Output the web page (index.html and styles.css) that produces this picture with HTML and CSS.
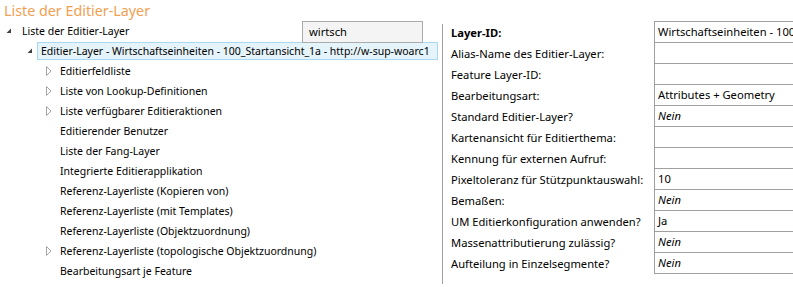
FILE: index.html
```html
<!DOCTYPE html>
<html>
<head>
<meta charset="utf-8">
<link rel="stylesheet" href="styles.css">
</head>
<body>
<div class="title">Liste der Editier-Layer</div>
<div class="main">
  <div class="tree">
    <div class="search">wirtsch</div>
    <div class="row lvl0"><span class="exp"><svg width="6" height="6" viewBox="0 0 6 6"><polygon points="5,0.5 5,5 0.5,5" fill="#404040"/></svg></span><span class="label">Liste der Editier-Layer</span></div>
    <div class="row lvl1"><span class="exp"><svg width="6" height="6" viewBox="0 0 6 6"><polygon points="5,0.5 5,5 0.5,5" fill="#404040"/></svg></span><span class="label sel">Editier-Layer - Wirtschaftseinheiten - 100_Startansicht_1a - http://w-sup-woarc1</span></div>
    <div class="row lvl2"><span class="exp"><svg width="6" height="10" viewBox="0 0 6 10"><polygon points="0.5,0.5 5,5 0.5,9.5" fill="none" stroke="#a6a6a6"/></svg></span><span class="label">Editierfeldliste</span></div>
    <div class="row lvl2"><span class="exp"><svg width="6" height="10" viewBox="0 0 6 10"><polygon points="0.5,0.5 5,5 0.5,9.5" fill="none" stroke="#a6a6a6"/></svg></span><span class="label">Liste von Lookup-Definitionen</span></div>
    <div class="row lvl2"><span class="exp"><svg width="6" height="10" viewBox="0 0 6 10"><polygon points="0.5,0.5 5,5 0.5,9.5" fill="none" stroke="#a6a6a6"/></svg></span><span class="label">Liste verfügbarer Editieraktionen</span></div>
    <div class="row lvl2"><span class="exp"></span><span class="label">Editierender Benutzer</span></div>
    <div class="row lvl2"><span class="exp"></span><span class="label">Liste der Fang-Layer</span></div>
    <div class="row lvl2"><span class="exp"></span><span class="label">Integrierte Editierapplikation</span></div>
    <div class="row lvl2"><span class="exp"></span><span class="label">Referenz-Layerliste (Kopieren von)</span></div>
    <div class="row lvl2"><span class="exp"></span><span class="label">Referenz-Layerliste (mit Templates)</span></div>
    <div class="row lvl2"><span class="exp"></span><span class="label">Referenz-Layerliste (Objektzuordnung)</span></div>
    <div class="row lvl2"><span class="exp"><svg width="6" height="10" viewBox="0 0 6 10"><polygon points="0.5,0.5 5,5 0.5,9.5" fill="none" stroke="#a6a6a6"/></svg></span><span class="label">Referenz-Layerliste (topologische Objektzuordnung)</span></div>
    <div class="row lvl2"><span class="exp"></span><span class="label">Bearbeitungsart je Feature</span></div>
  </div>
  <div class="props">
    <div class="plabel bold">Layer-ID:</div><div class="pval">Wirtschaftseinheiten - 100_Startansicht_1a</div>
    <div class="plabel">Alias-Name des Editier-Layer:</div><div class="pval"></div>
    <div class="plabel">Feature Layer-ID:</div><div class="pval"></div>
    <div class="plabel">Bearbeitungsart:</div><div class="pval">Attributes + Geometry</div>
    <div class="plabel">Standard Editier-Layer?</div><div class="pval it">Nein</div>
    <div class="plabel">Kartenansicht für Editierthema:</div><div class="pval"></div>
    <div class="plabel">Kennung für externen Aufruf:</div><div class="pval"></div>
    <div class="plabel">Pixeltoleranz für Stützpunktauswahl:</div><div class="pval">10</div>
    <div class="plabel">Bemaßen:</div><div class="pval it">Nein</div>
    <div class="plabel">UM Editierkonfiguration anwenden?</div><div class="pval">Ja</div>
    <div class="plabel">Massenattributierung zulässig?</div><div class="pval it">Nein</div>
    <div class="plabel">Aufteilung in Einzelsegmente?</div><div class="pval it last">Nein</div>
  </div>
</div>
</body>
</html>
```

FILE: styles.css
```css
html, body {
  margin: 0;
  padding: 0;
  background: #ffffff;
  overflow: hidden;
}
body {
  width: 793px;
  height: 287px;
  font-family: "Noto Sans", "Open Sans", sans-serif;
  font-size: 11.2px;
  color: #000;
}
.title {
  height: 21px;
  line-height: 21px;
  padding-left: 4px;
  font-size: 14.3px;
  color: #f19f52;
  white-space: nowrap;
}
.main {
  display: flex;
  height: 266px;
}
.tree {
  position: relative;
  width: 442px;
  flex: none;
  font-size: 10.5px;
}
.search {
  position: absolute;
  left: 302px;
  top: 0;
  width: 113px;
  height: 20px;
  line-height: 20px;
  padding-left: 6px;
  border: 1px solid #ababab;
  background: #f4f4f4;
  z-index: 2;
  font-size: 11.2px;
}
.row {
  display: flex;
  align-items: center;
  height: 20px;
  white-space: nowrap;
}
.exp {
  flex: none;
  display: flex;
  align-items: center;
}
.lvl0 { padding-left: 6px; }
.lvl1 { padding-left: 27px; }
.lvl2 { padding-left: 46px; }
.lvl0 .exp { width: 16px; }
.lvl1 .exp { width: 10px; }
.lvl2 .exp { width: 14px; }
.exp svg { display: block; }
.label.sel {
  height: 16px;
  line-height: 16px;
  width: 396px;
  padding-left: 3px;
  border: 1px solid #a9d9f2;
  background: #e5f3fb;
}
.props {
  flex: 1;
  margin-top: 3px;
  border-left: 1px solid #a0a0a0;
  height: 260px;
  padding-left: 8px;
  display: grid;
  grid-template-columns: 203px 160px;
  grid-auto-rows: 21px;
  align-content: start;
}
.plabel {
  line-height: 21px;
  white-space: nowrap;
  margin-top: -2px;
}
.plabel.bold { font-weight: bold; }
.pval {
  border-left: 1px solid #a0a0a0;
  border-top: 1px solid #a0a0a0;
  line-height: 20px;
  padding-left: 3px;
  white-space: nowrap;
  overflow: hidden;
  margin-top: -3px;
}
.pval.last { border-bottom: 1px solid #a0a0a0; height: 20px; }
.pval.it { font-style: italic; }
```
